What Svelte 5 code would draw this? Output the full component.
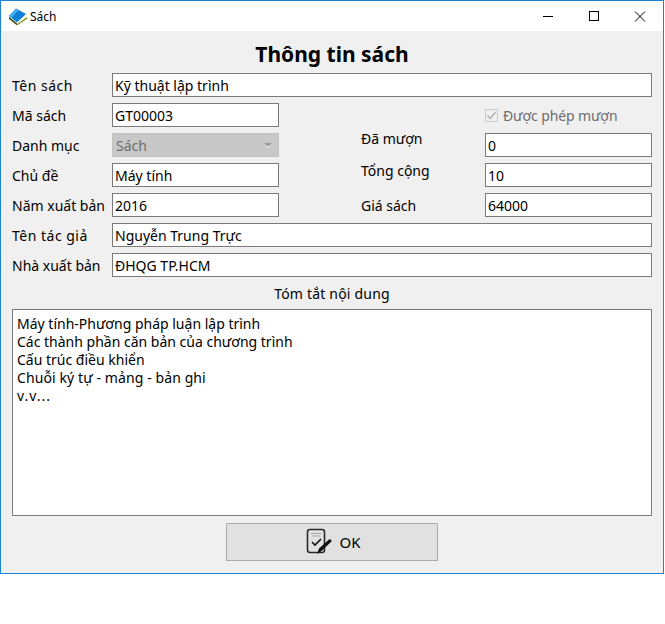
<script>
  const summary = [
    { text: "Máy tính-Phương pháp luận lập trình" },
    { text: "Các thành phần căn bản của chương trình" },
    { text: "Cấu trúc điều khiển" },
    { text: "Chuỗi ký tự - mảng - bản ghi", cls: "wider" },
    { text: "v.v...", cls: "dots" }
  ];
</script>

<div class="window">
  <header class="titlebar">
    <svg class="appicon" width="18" height="17" viewBox="0 0 18 17">
      <path d="M0 9 L8 16 L18 9 L18 11 L8 17.5 L0 11Z" fill="#8a9a20"/>
      <path d="M0 8 L7 0.5 L17 6 L8 14.5Z" fill="#0f7fd8"/>
      <path d="M0 8 L7 0.5 L9.5 2 L2.5 10Z" fill="#45b0f0"/>
      <path d="M0 9 L8 15.5 L8 17 L0 10.5Z" fill="#2a3a10"/>
    </svg>
    <span class="wtitle">Sách</span>
    <div class="controls">
      <svg class="ctl" width="46" height="31" viewBox="0 0 46 31"><path d="M18 15.5H28" stroke="#000" stroke-width="1"/></svg>
      <svg class="ctl" width="46" height="31" viewBox="0 0 46 31"><rect x="18.5" y="10.5" width="9" height="9" fill="none" stroke="#000"/></svg>
      <svg class="ctl" width="46" height="31" viewBox="0 0 46 31"><path d="M18 10.5L28 20.5M28 10.5L18 20.5" stroke="#000" stroke-width="1"/></svg>
    </div>
  </header>
  <main class="body">
    <h1>Thông tin sách</h1>
    <div class="row"><span class="lbl tight">Tên sách</span><div class="input wide">Kỹ thuật lập trình</div></div>
    <div class="split">
      <div class="col">
        <div class="row"><span class="lbl">Mã sách</span><div class="input short">GT00003</div></div>
        <div class="row"><span class="lbl">Danh mục</span>
          <div class="combo short"><span>Sách</span><svg width="8" height="5" viewBox="0 0 8 5"><path d="M0 0H8L4 5Z" fill="#f0f0f0"/><path d="M0 0H8L5 3H3Z" fill="#999"/></svg></div>
        </div>
        <div class="row"><span class="lbl">Chủ đề</span><div class="input short">Máy tính</div></div>
        <div class="row"><span class="lbl">Năm xuất bản</span><div class="input short">2016</div></div>
      </div>
      <div class="col right">
        <div class="row check">
          <svg width="13" height="13" viewBox="0 0 13 13"><rect x="0.5" y="0.5" width="12" height="12" fill="#f0f0f0" stroke="#ccc"/><path d="M2.5 6.5L5.2 9.5L10.5 3.2" fill="none" stroke="#b5b5b5" stroke-width="1.6"/></svg>
          <span>Được phép mượn</span>
        </div>
        <div class="row"><span class="rl up8">Đã mượn</span><div class="input rshort">0</div></div>
        <div class="row"><span class="rl up5">Tổng cộng</span><div class="input rshort">10</div></div>
        <div class="row"><span class="rl">Giá sách</span><div class="input rshort">64000</div></div>
      </div>
    </div>
    <div class="row"><span class="lbl tight2">Tên tác giả</span><div class="input wide">Nguyễn Trung Trực</div></div>
    <div class="row"><span class="lbl">Nhà xuất bản</span><div class="input wide">ĐHQG TP.HCM</div></div>
    <div class="caption">Tóm tắt nội dung</div>
    <div class="memo">
      {#each summary as line}<div class={line.cls}>{line.text}</div>{/each}
    </div>
    <div class="actions">
      <button class="ok">
        <svg width="28" height="28" viewBox="0 0 28 28">
          <rect x="1.5" y="1.5" width="17" height="23" rx="2.5" fill="none" stroke="#2a2a2a" stroke-width="1.6"/>
          <path d="M5 5.5H15M6 8H14" stroke="#aaa" stroke-width="1"/>
          <path d="M6 14L9 17L15 11" fill="none" stroke="#111" stroke-width="1.6"/>
          <path d="M11 26L13 20.5L23 11.5C24 10.5 26 12 25.5 13.5L15.5 23Z" fill="#111"/>
        </svg>
        <span class="oktext">OK</span>
      </button>
    </div>
  </main>
</div>

<style>
  :global(body) { margin: 0; background: #fff; }
  .window {
    width: 664px; height: 574px; box-sizing: border-box;
    border: 1px solid #1883d7; background: #f0f0f0;
    display: flex; flex-direction: column;
    font-family: "Noto Sans", "DejaVu Sans", sans-serif;
    font-size: 14px; color: #000; overflow: hidden;
  }
  .titlebar { height: 30px; background: #fff; display: flex; align-items: center; flex: none; }
  .appicon { margin-left: 8px; }
  .wtitle { margin-left: 3px; font-size: 12px; }
  .controls { margin-left: auto; display: flex; }
  .ctl { display: block; }
  .body { flex: 1; padding: 11px 11px 0 11px; display: flex; flex-direction: column; }
  h1 { margin: 0; font-size: 21px; line-height: 25px; height: 31px; text-align: center; font-weight: 700; }
  .row { display: flex; align-items: center; height: 24px; margin-bottom: 6px; flex: none; }
  .lbl { width: 100px; flex: none; white-space: nowrap; }
  .tight { letter-spacing: 0.5px; }
  .tight2 { letter-spacing: 0.5px; }
  .input, .combo { height: 24px; box-sizing: border-box; border: 1px solid #7a7a7a; background: #fff; padding: 0 2px; display: flex; align-items: center; white-space: nowrap; }
  .wide { width: 540px; }
  .short { width: 167px; }
  .rshort { width: 167px; }
  .combo { background: #c8c8c8; border-color: #c0c0c0; color: #6d6d6d; justify-content: space-between; padding: 0 6px 0 3px; }
  .split { display: flex; }
  .col { width: 349px; }
  .right { width: 291px; }
  .rl { width: 124px; flex: none; }
  .up8 { position: relative; top: -7px; }
  .up5 { position: relative; top: -5px; }
  .check { color: #6d6d6d; padding-left: 124px; gap: 5px; letter-spacing: -0.1px; }
  .caption { text-align: center; height: 26px; line-height: 24px; margin-top: -1px; letter-spacing: 0.2px; }
  .memo { width: 640px; height: 207px; box-sizing: border-box; border: 1px solid #7a7a7a; background: #fff; padding: 5px 4px; line-height: 18px; margin-top: 1px; flex: none; }
  .wider { letter-spacing: 0.1px; }
  .dots { letter-spacing: 1px; }
  .actions { display: flex; justify-content: center; margin-top: 7px; }
  .ok { width: 212px; height: 38px; box-sizing: border-box; background: #e1e1e1; border: 1px solid #adadad; display: flex; align-items: center; justify-content: center; gap: 5px; font: inherit; color: #000; padding: 0 0 0 3px; }
  .oktext { font-size: 15px; }
</style>
